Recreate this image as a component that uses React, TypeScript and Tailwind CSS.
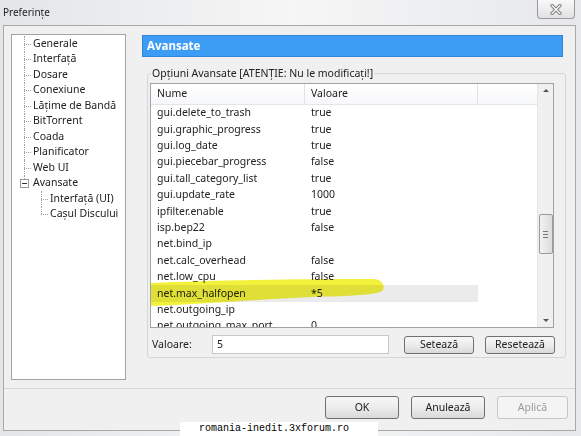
import React from "react";

const rows: [string, string][] = [
    ["gui.delete_to_trash", "true"],
    ["gui.graphic_progress", "true"],
    ["gui.log_date", "true"],
    ["gui.piecebar_progress", "false"],
    ["gui.tall_category_list", "true"],
    ["gui.update_rate", "1000"],
    ["ipfilter.enable", "true"],
    ["isp.bep22", "false"],
    ["net.bind_ip", ""],
    ["net.calc_overhead", "false"],
    ["net.low_cpu", "false"],
    ["net.max_halfopen", "*5"],
    ["net.outgoing_ip", ""],
    ["net.outgoing_max_port", "0"],
];

const treeTop = [
    "Generale",
    "Interfață",
    "Dosare",
    "Conexiune",
    "Lățime de Bandă",
    "BitTorrent",
    "Coada",
    "Planificator",
    "Web UI",
];

const TreeItem = ({ label, last }: { label: string; last?: boolean }) => (
    <div className="flex items-center h-[15.5px]">
        <span className="relative w-[19px] h-full shrink-0">
            <span
                className={`absolute left-[12px] top-0 border-l border-dotted border-[#a0a0a0] ${
                    last ? "h-1/2" : "h-full"
                }`}
            />
            <span className="absolute left-[12px] top-1/2 w-[7px] border-t border-dotted border-[#a0a0a0]" />
        </span>
        <span className="ml-[2px] whitespace-nowrap">{label}</span>
    </div>
);

const Button = ({ label, w, disabled }: { label: string; w: string; disabled?: boolean }) => (
    <div
        className={`${w} h-[23px] flex items-center justify-center rounded-[3px] border ${
            disabled
                ? "border-[#c4c7ca] bg-[#f4f4f4] text-[#9a9a9a]"
                : "border-[#707070] bg-gradient-to-b from-[#f7f7f7] via-[#ececec] to-[#d9d9d9] text-[#222]"
        }`}
    >
        {label}
    </div>
);

export default function App() {
    return (
        <div
            className="relative w-[581px] h-[436px] overflow-hidden bg-gradient-to-r from-[#e3e5e8] via-[#f6f6f6] to-[#e6e8eb] text-[10.5px] text-[#222]"
            style={{ fontFamily: "'Noto Sans', 'Open Sans', sans-serif" }}
        >
            {/* title bar */}
            <div className="h-[25px] flex items-center pl-[3px] text-[10px] text-[#222]">Preferințe</div>
            <div className="absolute left-[537px] top-0 w-[38px] h-[19px] rounded-b-[4px] border border-t-0 border-[#9a9a9a] bg-gradient-to-b from-[#f8f8f8] to-[#e2e2e2] flex items-center justify-center">
                <svg width="12" height="11" viewBox="0 0 12 11">
                    <path d="M2 1.5 L10 9.5 M10 1.5 L2 9.5" stroke="#7a7a7a" strokeWidth="3.2" strokeLinecap="round" />
                    <path d="M2 1.5 L10 9.5 M10 1.5 L2 9.5" stroke="#fafafa" strokeWidth="1.4" strokeLinecap="round" />
                </svg>
            </div>

            {/* client area */}
            <div className="ml-[3px] w-[573px] h-[406px] bg-[#f0f0f0] border border-[#a9a9a9] flex flex-col">
                <div className="h-[362px] flex">
                    {/* tree */}
                    <div className="ml-[7px] mt-[8px] w-[115px] h-[346px] bg-white border border-[#a3a3a3] pt-px">
                        {treeTop.map((t) => (
                            <TreeItem key={t} label={t} />
                        ))}
                        <div className="flex items-center h-[15.5px]">
                            <span className="relative w-[19px] h-full shrink-0">
                                <span className="absolute left-[12px] top-0 h-1/2 border-l border-dotted border-[#a0a0a0]" />
                                <span className="absolute left-[8px] top-[3px] w-[9px] h-[9px] border border-[#9a9a9a] bg-white flex items-center justify-center">
                                    <span className="w-[5px] border-t border-[#333]" />
                                </span>
                            </span>
                            <span className="ml-[2px]">Avansate</span>
                        </div>
                        <div className="pl-[17px]">
                            <TreeItem label="Interfață (UI)" />
                            <TreeItem label="Cașul Discului" last />
                        </div>
                    </div>

                    {/* right panel */}
                    <div className="ml-[16px] mt-[9px] w-[426px] flex flex-col">
                        <div className="w-[421px] h-[22px] bg-[#3d9cf3] border border-[#2f86d6] flex items-center pl-[4px] text-white font-bold text-[11.5px]">
                            Avansate
                        </div>

                        {/* group box */}
                        <div className="relative mt-[16px] ml-[5px] w-[419px] h-[285px] border border-[#d5d5d5] rounded-[3px]">
                            <div className="absolute -top-[8px] left-[3px] px-[1px] bg-[#f0f0f0] leading-[14px]">
                                Opțiuni Avansate [ATENȚIE: Nu le modificați!]
                            </div>

                            {/* list view */}
                            <div className="mt-[9px] ml-[2px] w-[404px] h-[245px] bg-white border border-[#9ea3aa] flex">
                                <div className="relative w-[386px] h-full overflow-hidden">
                                    <div className="flex h-[21px] border-b border-[#e5e5e5] bg-gradient-to-b from-white to-[#f7f8fa]">
                                        <div className="w-[154px] pl-[6px] flex items-center border-r border-[#e2e2e2]">Nume</div>
                                        <div className="w-[173px] pl-[6px] flex items-center border-r border-[#e2e2e2]">Valoare</div>
                                        <div className="flex-1" />
                                    </div>
                                    {rows.map(([n, v], i) => (
                                        <div key={n} className="flex h-[16.4px] items-center">
                                            <div className={`flex h-full items-center ${i === 11 ? "bg-[#ebebeb]" : ""}`}>
                                                <div className="w-[154px] pl-[6px] whitespace-nowrap">{n}</div>
                                                <div className="w-[173px] pl-[6px]">{v}</div>
                                            </div>
                                        </div>
                                    ))}
                                    {/* highlighter mark */}
                                    <svg
                                        className="absolute left-0 top-[195px] mix-blend-multiply"
                                        width="240"
                                        height="30"
                                        viewBox="0 0 240 30"
                                    >
                                        <path
                                            d="M0 4 C60 1 150 0 222 0 C231 0 234 6 232 11 C228 16 200 17 160 18 C110 20 60 25 0 27 Z"
                                            fill="#f2f23c"
                                        />
                                    </svg>
                                </div>
                                {/* scrollbar */}
                                <div className="w-[16px] h-full bg-[#f0f0f0] border-l border-[#e6e6e6] flex flex-col items-center justify-between py-[5px]">
                                    <span className="w-0 h-0 border-l-[3px] border-r-[3px] border-b-[3px] border-transparent border-b-[#555]" />
                                    <div className="w-[14px] h-[40px] mt-[122px] rounded-[2px] border border-[#9a9a9a] bg-gradient-to-r from-[#f2f2f2] to-[#dcdcdc] flex flex-col items-center justify-center gap-[2px]">
                                        <span className="w-[5px] border-t border-[#777]" />
                                        <span className="w-[5px] border-t border-[#777]" />
                                        <span className="w-[5px] border-t border-[#777]" />
                                    </div>
                                    <div className="flex-1" />
                                    <span className="w-0 h-0 border-l-[3px] border-r-[3px] border-t-[3px] border-transparent border-t-[#555]" />
                                </div>
                            </div>

                            {/* value row */}
                            <div className="mt-[7px] ml-[4px] flex items-center h-[19px]">
                                <span className="w-[60px]">Valoare:</span>
                                <div className="w-[177px] h-[19px] border border-[#c5c8cc] bg-white pl-[4px] flex items-center">5</div>
                                <Button label="Setează" w="ml-[15px] w-[70px] !h-[18px]" />
                                <Button label="Resetează" w="ml-[11px] w-[70px] !h-[18px]" />
                            </div>
                        </div>
                    </div>
                </div>

                {/* buttons */}
                <div className="flex-1 border-t border-[#d6d6d6] flex items-start pt-[7px] pl-[321px] gap-[12px]">
                    <Button label="OK" w="w-[74px]" />
                    <Button label="Anulează" w="w-[74px]" />
                    <Button label="Aplică" w="w-[71px]" disabled />
                </div>
            </div>

            {/* watermark */}
            <div
                className="absolute left-[180px] top-[422px] w-[198px] h-[14px] bg-white text-black text-[10px] leading-[14px] pl-[19px]"
                style={{ fontFamily: "'Liberation Mono', monospace" }}
            >
                romania-inedit.3xforum.ro
            </div>
        </div>
    );
}
